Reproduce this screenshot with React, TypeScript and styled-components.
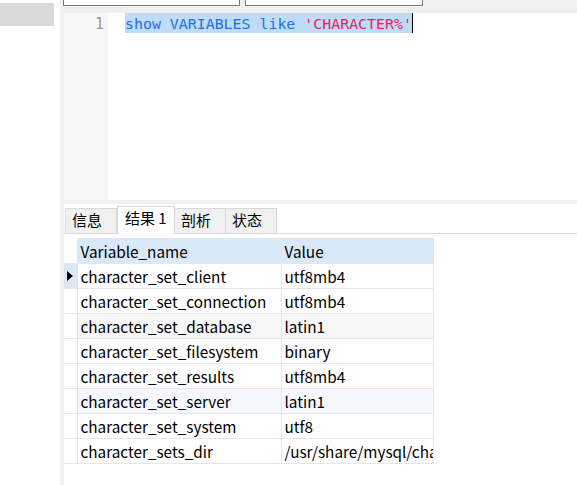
import React from 'react';
import styled, {createGlobalStyle} from 'styled-components';

const GlobalStyle = createGlobalStyle`
  html, body {
    margin: 0;
    padding: 0;
    background: #fff;
    overflow: hidden;
  }
  body {
    font-family: 'Noto Sans CJK SC', 'Noto Sans', sans-serif;
  }
`;

const StyledPage = styled.div`
  display: flex;
  width: 577px;
  height: 485px;
  overflow: hidden;
`;

const StyledSidebar = styled.div`
  width: 60px;
  flex-shrink: 0;
  background: #fff;
  padding-top: 3px;
  box-sizing: border-box;
`;

const StyledSidebarItem = styled.div`
  width: 54px;
  height: 23px;
  background: #d9d9d9;
`;

const StyledMain = styled.div`
  flex: 1;
  display: flex;
  flex-direction: column;
  background: #f0f0f0;
  min-width: 0;
`;

const StyledToolbar = styled.div`
  height: 13px;
  display: flex;
  gap: 5px;
  padding-left: 3px;
  flex-shrink: 0;
`;

const StyledField = styled.div<{width: number}>`
  width: ${props => props.width}px;
  height: 6px;
  box-sizing: border-box;
  background: #fff;
  border: 1px solid #7a7a7a;
  border-top: none;
`;

const StyledBody = styled.div`
  flex: 1;
  display: flex;
  flex-direction: column;
  padding-left: 4px;
  min-height: 0;
`;

const StyledEditor = styled.div`
  height: 187px;
  display: flex;
  background: #fff;
  flex-shrink: 0;
`;

const StyledGutter = styled.div`
  width: 44px;
  background: #f7f7f7;
  color: #999;
  font-family: 'DejaVu Sans Mono', monospace;
  font-size: 15px;
  line-height: 20px;
  padding-top: 1px;
  text-align: right;
  padding-right: 4px;
  box-sizing: border-box;
`;

const StyledCode = styled.div`
  padding-left: 17px;
  font-family: 'DejaVu Sans Mono', 'Liberation Mono', monospace;
  font-size: 14.9px;
  line-height: 20px;
  white-space: pre;
`;

const StyledSelection = styled.span`
  display: inline-block;
  background: #bfdcf7;
  border-right: 1px solid #000;
  height: 20px;
  padding-top: 1px;
  box-sizing: border-box;
`;

const StyledToken = styled.span<{kind: 'keyword' | 'string'}>`
  color: ${props => props.kind === 'keyword' ? '#1e6fe8' : '#e8245a'};
`;

const StyledGap = styled.div`
  height: 4px;
  flex-shrink: 0;
`;

const StyledTabBar = styled.div`
  height: 29px;
  display: flex;
  align-items: flex-end;
  padding-left: 2px;
  background: #fff;
  border-bottom: 1px solid #d9d9d9;
  flex-shrink: 0;
`;

const StyledTab = styled.div<{active?: boolean}>`
  height: ${props => props.active ? 28 : 25}px;
  width: ${props => props.active ? 58 : 52}px;
  box-sizing: border-box;
  padding-left: ${props => props.active ? 7 : 6}px;
  border: 1px solid #d9d9d9;
  border-bottom: none;
  margin-left: ${props => props.active ? 0 : -1}px;
  background: ${props => props.active ? '#fff' : '#f0f0f0'};
  margin-bottom: ${props => props.active ? -1 : 0}px;
  font-size: 15px;
  line-height: ${props => props.active ? 21 : 22}px;
  color: #000;
  position: relative;
  z-index: ${props => props.active ? 1 : 0};
`;

const StyledResults = styled.div`
  flex: 1;
  background: #fff;
  padding-top: 4px;
`;

const StyledTable = styled.table`
  width: 369px;
  border-collapse: collapse;
  font-family: 'Noto Sans CJK SC', 'Noto Sans', sans-serif;
  font-size: 15.3px;
  color: #000;
  table-layout: fixed;
  td, th {
    height: 25px;
    padding: 0 0 0 3px;
    text-align: left;
    font-weight: normal;
    white-space: nowrap;
    overflow: hidden;
    box-sizing: border-box;
    border: 1px solid #e6e6e6;
  }
`;

const StyledHeadCell = styled.th<{last?: boolean}>`
  background: #d9e9f7;
  && {
    border-color: ${props => props.last ? '#e6e6e6' : '#d9e9f7'};
    border-right-color: #e6e6e6;
  }
`;

const StyledIndicator = styled.td<{current?: boolean}>`
  background: ${props => props.current ? '#dbe8f5' : '#fff'};
  && {
    padding: 0;
    border-left: none;
    border-top-color: ${props => props.current ? '#dbe8f5' : '#e6e6e6'};
  }
  position: relative;
`;

const StyledIndicatorHead = styled.th`
  && {
    padding: 0;
    border: none;
  }
`;

const StyledRow = styled.tr<{tone?: 'grey' | 'blue'}>`
  background: ${props => props.tone === 'grey' ? '#f7f7f7' : props.tone === 'blue' ? '#f5f9fe' : '#fff'};
`;

const StyledArrow = styled.span`
  position: absolute;
  left: 3px;
  top: 7px;
  width: 0;
  height: 0;
  border-top: 5px solid transparent;
  border-bottom: 5px solid transparent;
  border-left: 6px solid #000;
`;

const rows: {name: string, value: string, tone?: 'grey' | 'blue'}[] = [
  {name: 'character_set_client', value: 'utf8mb4'},
  {name: 'character_set_connection', value: 'utf8mb4'},
  {name: 'character_set_database', value: 'latin1', tone: 'grey'},
  {name: 'character_set_filesystem', value: 'binary'},
  {name: 'character_set_results', value: 'utf8mb4'},
  {name: 'character_set_server', value: 'latin1', tone: 'blue'},
  {name: 'character_set_system', value: 'utf8'},
  {name: 'character_sets_dir', value: '/usr/share/mysql/charsets/'},
];

const tabs = ['信息', '结果 1', '剖析', '状态'];

const App: React.FC = () => {
  return (
    <StyledPage>
      <GlobalStyle/>
      <StyledSidebar>
        <StyledSidebarItem/>
      </StyledSidebar>
      <StyledMain>
        <StyledToolbar>
          <StyledField width={177}/>
          <StyledField width={178}/>
        </StyledToolbar>
        <StyledBody>
          <StyledEditor>
            <StyledGutter>1</StyledGutter>
            <StyledCode>
              <StyledSelection>
                <StyledToken kind='keyword'>show VARIABLES like </StyledToken>
                <StyledToken kind='string'>'CHARACTER%'</StyledToken>
              </StyledSelection>
            </StyledCode>
          </StyledEditor>
          <StyledGap/>
          <StyledTabBar>
            {tabs.map((tab, i) => (
              <StyledTab key={tab} active={i === 1}>{tab}</StyledTab>
            ))}
          </StyledTabBar>
          <StyledResults>
            <StyledTable>
              <colgroup>
                <col style={{width: 13}}/>
                <col style={{width: 204}}/>
                <col style={{width: 152}}/>
              </colgroup>
              <thead>
                <tr>
                  <StyledIndicatorHead/>
                  <StyledHeadCell>Variable_name</StyledHeadCell>
                  <StyledHeadCell last>Value</StyledHeadCell>
                </tr>
              </thead>
              <tbody>
                {rows.map((row, i) => (
                  <StyledRow key={row.name} tone={row.tone}>
                    <StyledIndicator current={i === 0}>
                      {i === 0 && <StyledArrow/>}
                    </StyledIndicator>
                    <td>{row.name}</td>
                    <td>{row.value}</td>
                  </StyledRow>
                ))}
              </tbody>
            </StyledTable>
          </StyledResults>
        </StyledBody>
      </StyledMain>
    </StyledPage>
  );
};

export default App;
